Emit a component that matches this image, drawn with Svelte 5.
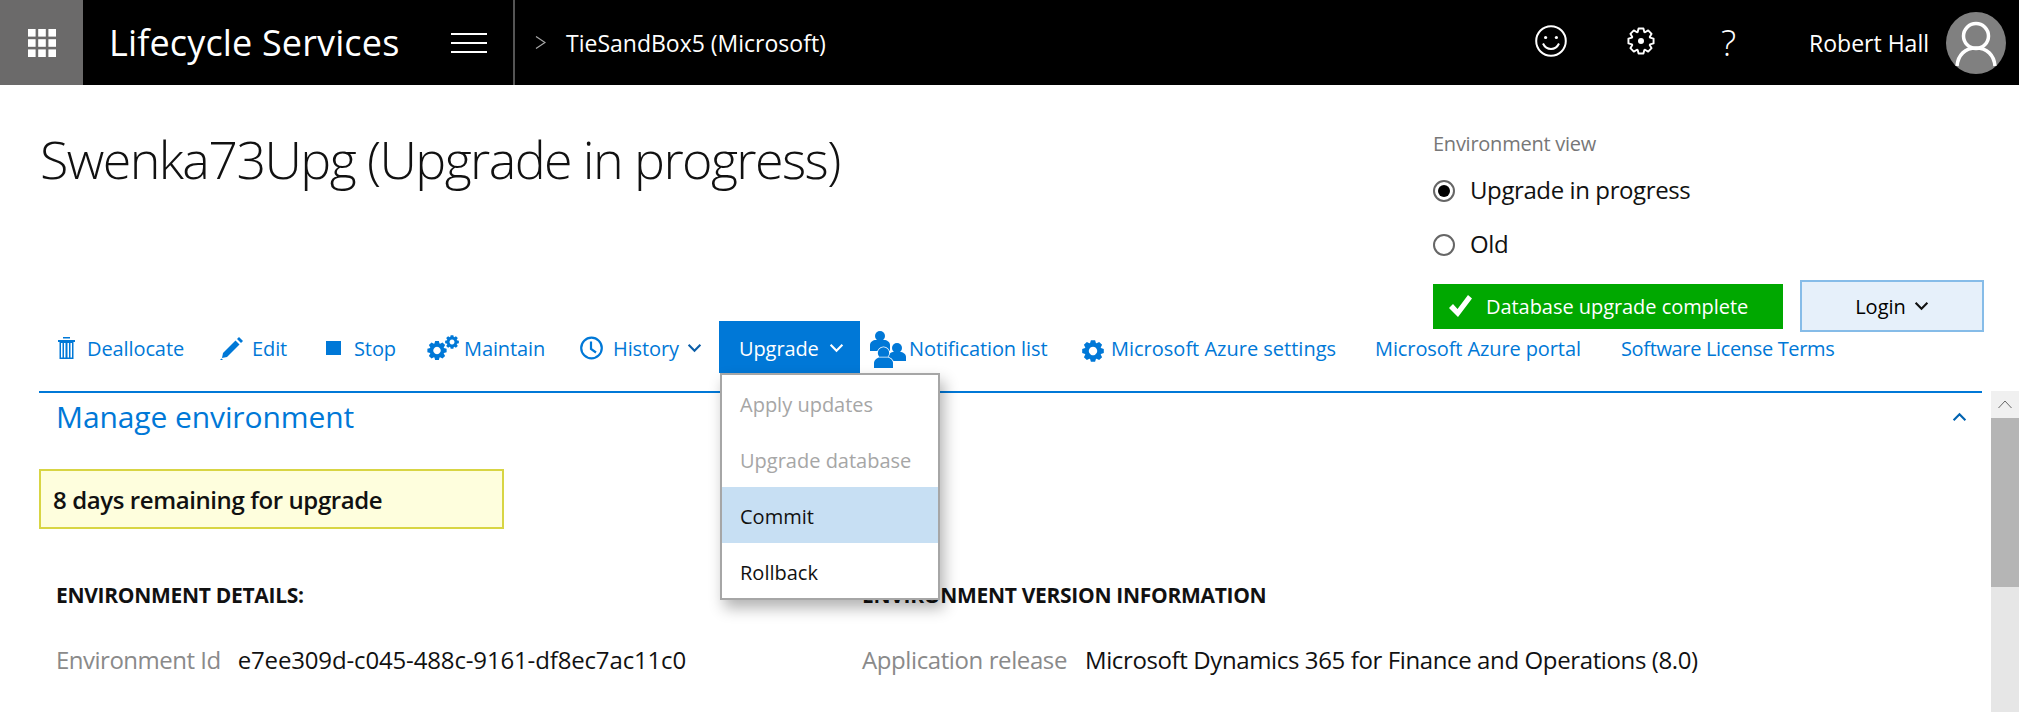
<script>
	// gear outline, used by the header and the nav icons
	function gear(cx, cy, outer, inner, teeth) {
		const pts = [];
		const step = (Math.PI * 2) / teeth;
		for (let i = 0; i < teeth; i++) {
			const a = i * step;
			const offs = [
				[-0.5, inner],
				[-0.27, outer],
				[0.27, outer],
				[0.5, inner]
			];
			for (const [o, r] of offs) {
				const t = a + o * step * 0.9;
				pts.push(`${(cx + Math.cos(t) * r).toFixed(2)},${(cy + Math.sin(t) * r).toFixed(2)}`);
			}
		}
		return pts.join(' ');
	}

	const gearPath = (cx, cy, outer, inner) => 'M' + gear(cx, cy, outer, inner, 8).replaceAll(' ', 'L') + 'Z';

	const menu = [
		{ label: 'Apply updates', state: 'off' },
		{ label: 'Upgrade database', state: 'off' },
		{ label: 'Commit', state: 'hover' },
		{ label: 'Rollback', state: '' }
	];
</script>

<div class="page">
	<header class="topbar">
		<div class="tile">
			<svg width="28" height="28" viewBox="0 0 28 28" fill="#fff">
				{#each [0, 10.2, 20.4] as y}
					{#each [0, 10.2, 20.4] as x}
						<rect {x} {y} width="7.6" height="7.6" />
					{/each}
				{/each}
			</svg>
		</div>
		<div class="brand">Lifecycle Services</div>
		<div class="burger"><span></span><span></span><span></span></div>
		<div class="crumb">
			<svg width="11" height="13" viewBox="0 0 11 13" fill="none" stroke="#aaa" stroke-width="1.2"><path d="M1 .5l9 6-9 6" /></svg>
			<span>TieSandBox5 (Microsoft)</span>
		</div>
		<div class="tools">
			<svg class="smile" width="32" height="32" viewBox="0 0 32 32" fill="none" stroke="#fff" stroke-width="2">
				<circle cx="16" cy="16" r="14.8" />
				<circle cx="10.6" cy="12.5" r="1.6" fill="#fff" stroke="none" />
				<circle cx="21.4" cy="12.5" r="1.6" fill="#fff" stroke="none" />
				<path d="M8 18.500c1.800 3.800 4.800 5.500 8 5.500s6.200-1.700 8-5.500" />
			</svg>
			<svg class="cog" width="28" height="28" viewBox="0 0 28 28" fill="none" stroke="#fff" stroke-width="1.900">
				<polygon points={gear(14, 14, 12.8, 9.6, 8)} stroke-linejoin="round" />
				<circle cx="14" cy="14" r="3" fill="#fff" stroke="none" />
			</svg>
			<span class="help">?</span>
			<span class="user">Robert Hall</span>
			<svg class="avatar" width="60" height="62" viewBox="0 0 60 62">
				<ellipse cx="30" cy="31" rx="30" ry="31" fill="#808080" />
				<g fill="none" stroke="#fff" stroke-width="3.500">
					<circle cx="30" cy="24" r="12.500" />
					<path d="M11 54c1-11 8-18 19-18s18 7 19 18" />
				</g>
			</svg>
		</div>
	</header>

	<section class="top">
		<h1>Swenka73Upg (Upgrade in progress)</h1>
		<div class="view">
			<div class="view-label">Environment view</div>
			<label class="radio first"><span class="dot on"></span><span>Upgrade in progress</span></label>
			<label class="radio"><span class="dot"></span><span>Old</span></label>
			<div class="status-row">
				<div class="status">
					<svg width="23" height="22" viewBox="0 0 23 22"><path d="M0 13l4-4 4.500 5L19 0l4 3.500L9 22z" fill="#fff" /></svg>
					<span>Database upgrade complete</span>
				</div>
				<button class="login">Login
					<svg width="15" height="10" viewBox="0 0 14 9" fill="none" stroke="#111" stroke-width="2"><path d="M1.500 1.500L7 7l5.500-5.500" /></svg>
				</button>
			</div>
		</div>
	</section>

	<nav class="actions">
		<a href="#d">
			<svg width="17" height="22" viewBox="0 0 17 22" fill="#0078d7">
				<rect x="5" y="0" width="7" height="1.500" />
				<rect x="0" y="3" width="17" height="2" />
				<path d="M1.500 5h14v17h-14zM3 6v14.500h1.500V6zM6 6v14.500h1.500V6zM9.500 6v14.500H11V6zM12.500 6v14.500H14V6z" fill-rule="evenodd" />
			</svg>
			<span class="t12">Deallocate</span>
		</a>
		<a href="#e">
			<svg width="23" height="23" viewBox="0 0 23 23" fill="#0078d7">
				<path d="M15.500 3.500l4 4L7 20l-5 1 1-5z" />
				<path d="M17 2l2-2 4 4-2 2z" />
				<path d="M0 23l1.500-1.500L3 23z" />
			</svg>
			<span class="t9">Edit</span>
		</a>
		<a href="#s">
			<span class="square"></span>
			<span class="t13">Stop</span>
		</a>
		<a href="#m">
			<svg class="up-gears" width="32" height="25" viewBox="0 0 32 25" fill="#0078d7">
				<path fill-rule="evenodd" d="{gearPath(10, 15.500, 9.800, 7.400)} M10 11.800a3.700 3.700 0 1 0 .01 0Z" />
				<path fill-rule="evenodd" d="{gearPath(25, 7, 7, 5.200)} M25 4.500a2.500 2.500 0 1 0 .01 0Z" />
			</svg>
			<span class="t5">Maintain</span>
		</a>
		<a href="#h">
			<svg width="23" height="24" viewBox="0 0 23 24" fill="none" stroke="#0078d7" stroke-width="2.200">
				<circle cx="11.500" cy="12" r="10.300" />
				<path d="M11 5.500V13l5 3.500" />
			</svg>
			<span class="t10">History</span>
			<svg class="chev" width="15" height="10" viewBox="0 0 14 9" fill="none" stroke="#0b5ea8" stroke-width="2"><path d="M1.500 1.500L7 7l5.500-5.500" /></svg>
		</a>
		<div class="upgrade">
			<span>Upgrade</span>
			<svg width="15" height="10" viewBox="0 0 14 9" fill="none" stroke="#fff" stroke-width="2"><path d="M1.500 1.500L7 7l5.500-5.500" /></svg>
			<ul class="menu">
				{#each menu as item}
					<li class:off={item.state === 'off'} class:hover={item.state === 'hover'}>{item.label}</li>
				{/each}
			</ul>
		</div>
		<a href="#n">
			<svg class="people" width="36" height="37" viewBox="0 0 36 37" fill="#0078d7">
				<circle cx="10" cy="5" r="5" />
				<path d="M0 20v-6c0-3 3-5 6-5h8c3 0 6 2 6 5v6z" />
				<circle cx="27" cy="17" r="5" />
				<path d="M18 30v-4c0-3 3-5 6-5h6c3 0 6 2 6 5v4z" />
				<g stroke="#fff" stroke-width="1.500" paint-order="stroke">
					<circle cx="13.500" cy="22" r="5.700" />
					<path d="M4 37v-5c0-3 3-5.500 6-5.500h7c3 0 6 2.500 6 5.500v5z" />
				</g>
			</svg>
			<span class="t3">Notification list</span>
		</a>
		<a href="#z">
			<svg class="azure" width="22" height="22" viewBox="0 0 22 22" fill="#0078d7">
				<path fill-rule="evenodd" d="{gearPath(11, 11, 11, 8.500)} M11 6.800a4.200 4.200 0 1 0 .01 0Z" />
			</svg>
			<span class="t7 azure-text">Microsoft Azure settings</span>
		</a>
		<a href="#p">Microsoft Azure portal</a>
		<a href="#l" class="terms">Software License Terms</a>
	</nav>

	<div class="body">
		<main class="panel">
			<div class="panel-head">
				<h2>Manage environment</h2>
				<svg width="15" height="10" viewBox="0 0 14 9" fill="none" stroke="#0063b1" stroke-width="2"><path d="M1.500 7.500L7 2l5.500 5.500" /></svg>
			</div>
			<div class="notice">8 days remaining for upgrade</div>
			<div class="columns">
				<div>
					<h3>ENVIRONMENT DETAILS:</h3>
					<p class="id-row"><span class="key">Environment Id</span><span class="val id">e7ee309d-c045-488c-9161-df8ec7ac11c0</span></p>
				</div>
				<div>
					<h3>ENVIRONMENT VERSION INFORMATION</h3>
					<p><span class="key release">Application release</span><span class="val">Microsoft Dynamics 365 for Finance and Operations (8.0)</span></p>
				</div>
			</div>
		</main>
		<div class="scrollbar">
			<div class="sb-btn">
				<svg width="14" height="9" viewBox="0 0 14 9" fill="none" stroke="#666" stroke-width="1"><path d="M.5 8L7 1l6.500 7" /></svg>
			</div>
			<div class="sb-thumb"></div>
		</div>
	</div>
</div>

<style>
	:global(body) {
		margin: 0;
		background: #fff;
		overflow: hidden;
	}

	.page {
		width: 2019px;
		height: 712px;
		overflow: hidden;
		font-family: 'Open Sans', 'Noto Sans', sans-serif;
		color: #111;
	}

	.topbar {
		display: flex;
		align-items: center;
		height: 85px;
		background: #000;
		color: #fff;
	}

	.tile {
		display: flex;
		align-items: center;
		justify-content: center;
		width: 83px;
		height: 85px;
		background: #6b6a6a;
	}

	.brand {
		margin-left: 26px;
		width: 342px;
		font-size: 36px;
		letter-spacing: 0.15px;
		white-space: nowrap;
	}

	.burger {
		display: flex;
		flex-direction: column;
		justify-content: space-between;
		width: 36px;
		height: 20px;
	}

	.burger span {
		height: 2px;
		background: #fff;
	}

	.crumb {
		display: flex;
		align-items: center;
		gap: 20px;
		height: 85px;
		margin-left: 26px;
		padding-left: 20px;
		border-left: 2px solid #555;
		font-size: 23px;
	}

	.tools {
		display: flex;
		align-items: center;
		margin-left: auto;
		padding-right: 13px;
	}

	.smile,
	.cog {
		margin-bottom: 3px;
	}

	.cog {
		margin-left: 60px;
	}

	.help {
		margin-left: 66px;
		width: 17px;
		font-size: 36px;
		font-weight: 300;
	}

	.user {
		margin-left: 71px;
		font-size: 23px;
	}

	.avatar {
		margin-left: 17px;
	}

	.top {
		display: flex;
		justify-content: space-between;
		height: 236px;
		padding: 0 35px 0 40px;
	}

	h1 {
		margin: 35px 0 0;
		font-size: 52px;
		line-height: 78px;
		font-weight: 300;
		letter-spacing: -1.6px;
		white-space: nowrap;
	}

	.view {
		width: 551px;
		padding-top: 46px;
	}

	.view-label {
		font-size: 20px;
		line-height: 26px;
		color: #777;
		letter-spacing: -0.25px;
	}

	.radio {
		display: flex;
		align-items: center;
		gap: 15px;
		height: 30px;
		margin-top: 24px;
		font-size: 24px;
		letter-spacing: -0.4px;
	}

	.radio.first {
		margin-top: 17px;
	}

	.dot {
		position: relative;
		top: 2px;
		box-sizing: border-box;
		width: 22px;
		height: 22px;
		border: 2px solid #666;
		border-radius: 50%;
	}

	.dot.on::after {
		content: '';
		position: absolute;
		inset: 3px;
		border-radius: 50%;
		background: #000;
	}

	.status-row {
		display: flex;
		align-items: center;
		gap: 17px;
		margin-top: 22px;
	}

	.status {
		display: flex;
		align-items: center;
		gap: 14px;
		box-sizing: border-box;
		width: 350px;
		height: 45px;
		padding-left: 16px;
		background: #00a800;
		color: #fff;
		font-size: 20px;
		letter-spacing: -0.05px;
		white-space: nowrap;
	}

	.login {
		display: flex;
		align-items: center;
		justify-content: center;
		gap: 8px;
		box-sizing: border-box;
		width: 184px;
		height: 52px;
		border: 2px solid #86bce8;
		background: #e6f0fa;
		color: #000;
		font: inherit;
		font-size: 20px;
		font-weight: 500;
	}

	.actions {
		display: grid;
		grid-template-columns: 162px 106px 101px 153px 139px 151px 212px 293px 246px auto;
		align-items: center;
		height: 70px;
		align-content: start;
		margin-left: 58px;
		font-size: 20px;
		letter-spacing: -0.1px;
		white-space: nowrap;
	}

	.actions a {
		display: flex;
		align-items: center;
		height: 52px;
		padding-top: 2px;
		box-sizing: border-box;
		color: #0078d7;
		text-decoration: none;
	}

	.actions a.terms {
		letter-spacing: -0.35px;
	}

	.azure-text {
		letter-spacing: 0;
	}

	.t13 { margin-left: 13px; }
	.t12 { margin-left: 12px; }
	.t10 { margin-left: 10px; }
	.t9 { margin-left: 9px; }
	.t7 { margin-left: 7px; }
	.t5 { margin-left: 5px; }
	.t3 { margin-left: 3px; }

	.up-gears {
		margin-bottom: 1px;
	}

	.people {
		margin-top: 3px;
	}

	.azure {
		margin-top: 6px;
	}

	.chev {
		margin-left: 8px;
	}

	.square {
		width: 15px;
		height: 14px;
		background: #0078d7;
	}

	.upgrade {
		position: relative;
		display: flex;
		align-items: center;
		gap: 10px;
		box-sizing: border-box;
		width: 141px;
		height: 52px;
		padding: 2px 0 0 20px;
		background: #0078d7;
		color: #fff;
	}

	.menu {
		position: absolute;
		z-index: 5;
		top: 52px;
		left: 1px;
		box-sizing: border-box;
		width: 220px;
		height: 227px;
		margin: 0;
		padding: 0;
		list-style: none;
		background: #fff;
		border: 2px solid #a6a6a6;
		box-shadow: 4px 8px 14px rgba(0, 0, 0, 0.3);
		color: #111;
		letter-spacing: 0;
	}

	.menu li {
		display: flex;
		align-items: center;
		box-sizing: border-box;
		height: 56px;
		padding: 2px 0 0 18px;
	}

	.menu li.off {
		color: #a6a6a6;
	}

	.menu li.hover {
		background: #c7dff3;
	}

	.body {
		display: flex;
		gap: 9px;
		margin-left: 39px;
		height: 321px;
	}

	.panel {
		box-sizing: border-box;
		width: 1943px;
		border-top: 2px solid #0078d7;
	}

	.panel-head {
		display: flex;
		align-items: center;
		justify-content: space-between;
		box-sizing: border-box;
		height: 45px;
		padding: 2px 15px 0 17px;
	}

	h2 {
		margin: 0;
		font-size: 30px;
		font-weight: 400;
		letter-spacing: -0.1px;
		color: #0078d7;
	}

	.notice {
		display: flex;
		align-items: center;
		box-sizing: border-box;
		width: 465px;
		height: 60px;
		margin-top: 31px;
		padding-left: 12px;
		background: #fefedd;
		border: 2px solid #d8d544;
		font-size: 24px;
		font-weight: 600;
		letter-spacing: -0.4px;
	}

	.columns {
		display: grid;
		grid-template-columns: 806px 1fr;
		padding-left: 17px;
		margin-top: 52px;
	}

	h3 {
		margin: 0;
		font-size: 21px;
		line-height: 28px;
		font-weight: 700;
		letter-spacing: -0.3px;
		white-space: nowrap;
	}

	.columns p {
		display: flex;
		gap: 18px;
		margin: 35px 0 0;
		font-size: 24px;
		line-height: 32px;
		letter-spacing: -0.5px;
		white-space: nowrap;
	}

	.columns p.id-row {
		gap: 17px;
	}

	.val {
		letter-spacing: -0.38px;
	}

	.val.id {
		letter-spacing: -0.15px;
	}

	.key {
		color: #8a8a8a;
	}

	.key.release {
		letter-spacing: -0.4px;
	}

	.scrollbar {
		width: 28px;
		background: #e6e6e6;
	}

	.sb-btn {
		display: flex;
		align-items: center;
		justify-content: center;
		height: 27px;
		background: #f0f0f0;
	}

	.sb-thumb {
		height: 169px;
		background: #b5b5b5;
	}
</style>
